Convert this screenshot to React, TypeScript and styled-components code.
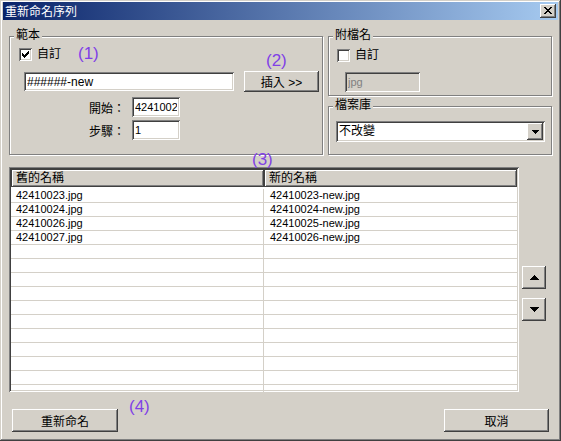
import styled, { createGlobalStyle, css } from "styled-components"

const GlobalStyle = createGlobalStyle`
    html, body {
        margin:0;
        padding:0;
        background:#d4d0c8;
    }
    body {
        font-family: "Liberation Sans", "Noto Sans CJK TC", sans-serif;
        font-size:12px;
        color:#000;
    }
`

const raised = css`
    box-shadow: inset -1px -1px #404040, inset 1px 1px #ffffff, inset -2px -2px #808080, inset 2px 2px #d4d0c8;
`
const sunken = css`
    box-shadow: inset 1px 1px #808080, inset -1px -1px #ffffff, inset 2px 2px #404040, inset -2px -2px #d4d0c8;
`

const Window = styled.div`
    position:relative;
    width:561px;
    height:441px;
    box-sizing:border-box;
    padding:2px 3px 3px 3px;
    background:#d4d0c8;
    box-shadow: inset -1px -1px #404040, inset 1px 1px #d4d0c8, inset -2px -2px #808080, inset 2px 2px #ffffff;
    display:flex;
    flex-direction:column;
`
const TitleBar = styled.div`
    height:18px;
    display:flex;
    align-items:center;
    justify-content:space-between;
    padding:0 2px 0 2px;
    background:linear-gradient(to right, #0a246a, #a6caf0);
    color:white;
    font-family:"Noto Sans CJK TC", sans-serif;
    font-size:12px;
`
const Title = styled.span`
    line-height:18px;
`
const CloseButton = styled.div`
    width:16px;
    height:14px;
    background:#d4d0c8;
    ${raised}
    display:flex;
    align-items:center;
    justify-content:center;
    padding-bottom:1px;
    box-sizing:border-box;
`
const Body = styled.div`
    padding:16px 6px 0 6px;
    display:flex;
    flex-direction:column;
`
const TopRow = styled.div`
    display:flex;
    gap:5px;
    align-items:flex-start;
`
const RightColumn = styled.div`
    display:flex;
    flex-direction:column;
    gap:10px;
`
const Group = styled.div<{ $w: number; $h: number }>`
    position:relative;
    width:${p => p.$w}px;
    height:${p => p.$h}px;
    box-sizing:border-box;
    border:1px solid #808080;
    box-shadow: inset 1px 1px #ffffff, 1px 1px #ffffff;
    display:flex;
    flex-direction:column;
    align-items:flex-start;
`
const Legend = styled.span`
    position:absolute;
    top:-9px;
    left:4px;
    padding:0 2px;
    line-height:14px;
    background:#d4d0c8;
`
const CheckRow = styled.label<{ $mt: number; $ml: number }>`
    display:flex;
    align-items:center;
    height:13px;
    margin:${p => p.$mt}px 0 0 ${p => p.$ml}px;
    gap:5px;
    line-height:13px;
`
const CheckBox = styled.span`
    width:13px;
    height:13px;
    background:white;
    ${sunken}
    display:flex;
    align-items:center;
    justify-content:center;
`
const PatternRow = styled.div`
    display:flex;
    align-items:center;
    height:21px;
    margin-top:10px;
    padding-left:14px;
    gap:10px;
`
const Field = styled.input<{ $w: number; $h: number; $size?: number }>`
    width:${p => p.$w}px;
    height:${p => p.$h}px;
    box-sizing:border-box;
    border:none;
    outline:none;
    margin:0;
    padding:0 3px;
    background:white;
    ${sunken}
    font-family:"Liberation Sans", "Noto Sans CJK TC", sans-serif;
    font-size:${p => p.$size ?? 12}px;
    color:#000;

    &:disabled {
        background:#d4d0c8;
        color:#808080;
    }
`
const Button = styled.button<{ $w: number; $h: number }>`
    width:${p => p.$w}px;
    height:${p => p.$h}px;
    border:none;
    margin:0;
    padding:0;
    background:#d4d0c8;
    ${raised}
    font-family:"Liberation Sans", "Noto Sans CJK TC", sans-serif;
    font-size:12px;
    color:#000;
    display:flex;
    align-items:center;
    justify-content:center;
`
const NumberRow = styled.div<{ $mt: number }>`
    display:flex;
    align-items:center;
    margin:${p => p.$mt}px 0 0 79px;
`
const NumberLabel = styled.span`
    width:43px;
`
const DisabledRow = styled.div`
    margin:10px 0 0 16px;
`
const Combo = styled.div`
    width:209px;
    height:21px;
    box-sizing:border-box;
    margin:14px 0 0 7px;
    padding:2px;
    background:white;
    ${sunken}
    display:flex;
    align-items:center;
`
const ComboText = styled.span`
    flex:1;
    padding-left:1px;
    line-height:17px;
`
const ComboArrow = styled.span`
    width:16px;
    height:17px;
    box-sizing:border-box;
    background:#d4d0c8;
    ${raised}
    display:flex;
    align-items:center;
    justify-content:center;
`
const ListRow = styled.div`
    display:flex;
    align-items:flex-start;
    margin-top:12px;
`
const ListView = styled.div`
    width:510px;
    height:225px;
    box-sizing:border-box;
    padding:2px;
    background:white;
    ${sunken}
    overflow:hidden;
`
const Header = styled.div`
    display:flex;
    height:18px;
`
const HeaderCell = styled.div<{ $w: number }>`
    width:${p => p.$w}px;
    box-sizing:border-box;
    border:1px solid #404040;
    background:#d4d0c8;
    box-shadow: inset 1px 1px #ffffff, inset -1px -1px #808080;
    padding-left:4px;
    line-height:16px;
    font-size:12px;
`
const Rows = styled.div`
    padding-top:2px;
`
const Row = styled.div`
    display:flex;
    height:14px;
    box-sizing:border-box;
    border-bottom:1px solid #d4d0c8;
`
const Cell = styled.div<{ $w: number; $first?: boolean }>`
    width:${p => p.$w}px;
    box-sizing:border-box;
    padding-left:${p => (p.$first ? 5 : 6)}px;
    border-right:${p => (p.$first ? "1px solid #d4d0c8" : "none")};
    line-height:13px;
    font-size:11px;
    white-space:nowrap;
    overflow:hidden;
`
const SideButtons = styled.div`
    display:flex;
    flex-direction:column;
    gap:9px;
    margin:99px 0 0 3px;
`
const BottomRow = styled.div`
    display:flex;
    justify-content:space-between;
    margin-top:17px;
    padding:0 3px 0 3px;
`
const Annotation = styled.span<{ $x: number; $y: number }>`
    position:absolute;
    left:${p => p.$x}px;
    top:${p => p.$y}px;
    font-family:"Liberation Sans", sans-serif;
    font-size:17px;
    line-height:17px;
    color:#8040e6;
`

const Pixels = ({ w, h, d }: { w: number; h: number; d: string }) => (
    <svg width={w} height={h} viewBox={`0 0 ${w} ${h}`} shapeRendering="crispEdges">
        <path d={d} fill="#000" />
    </svg>
)

const closeIcon = "M0 0h2v1h-2z M6 0h2v1h-2z M1 1h2v1h-2z M5 1h2v1h-2z M2 2h4v1h-4z M3 3h2v1h-2z M2 4h4v1h-4z M1 5h2v1h-2z M5 5h2v1h-2z M0 6h2v1h-2z M6 6h2v1h-2z"
const checkIcon = "M6 0h1v1h-1z M5 1h2v1h-2z M0 2h1v1h-1z M4 2h3v1h-3z M0 3h2v1h-2z M3 3h3v1h-3z M0 4h5v1h-5z M1 5h3v1h-3z M2 6h1v1h-1z"
const comboDown = "M0 0h7v1h-7z M1 1h5v1h-5z M2 2h3v1h-3z M3 3h1v1h-1z"
const bigUp = "M4 0h1v1h-1z M3 1h3v1h-3z M2 2h5v1h-5z M1 3h7v1h-7z M0 4h9v1h-9z"
const bigDown = "M0 0h9v1h-9z M1 1h7v1h-7z M2 2h5v1h-5z M3 3h3v1h-3z M4 4h1v1h-1z"

const oldNames = ["42410023.jpg", "42410024.jpg", "42410026.jpg", "42410027.jpg"]
const newNames = ["42410023-new.jpg", "42410024-new.jpg", "42410025-new.jpg", "42410026-new.jpg"]

function App() {
    const rows = Array.from({ length: 15 }, (_, i) => i)

    return (
        <>
            <GlobalStyle />
            <Window>
                <TitleBar>
                    <Title>重新命名序列</Title>
                    <CloseButton>
                        <Pixels w={8} h={7} d={closeIcon} />
                    </CloseButton>
                </TitleBar>
                <Body>
                    <TopRow>
                        <Group $w={314} $h={119}>
                            <Legend>範本</Legend>
                            <CheckRow $mt={11} $ml={9}>
                                <CheckBox>
                                    <Pixels w={7} h={7} d={checkIcon} />
                                </CheckBox>
                                <span>自訂</span>
                            </CheckRow>
                            <PatternRow>
                                <Field $w={210} $h={19} readOnly value="######-new" />
                                <Button $w={75} $h={21}>插入 &gt;&gt;</Button>
                            </PatternRow>
                            <NumberRow $mt={5}>
                                <NumberLabel>開始：</NumberLabel>
                                <Field $w={48} $h={20} $size={11} readOnly value="4241002" />
                            </NumberRow>
                            <NumberRow $mt={3}>
                                <NumberLabel>步驟：</NumberLabel>
                                <Field $w={48} $h={20} $size={11} readOnly value="1" />
                            </NumberRow>
                        </Group>
                        <RightColumn>
                            <Group $w={224} $h={60}>
                                <Legend>附檔名</Legend>
                                <CheckRow $mt={12} $ml={8}>
                                    <CheckBox />
                                    <span>自訂</span>
                                </CheckRow>
                                <DisabledRow>
                                    <Field $w={75} $h={20} $size={11} disabled value="jpg" readOnly />
                                </DisabledRow>
                            </Group>
                            <Group $w={224} $h={49}>
                                <Legend>檔案庫</Legend>
                                <Combo>
                                    <ComboText>不改變</ComboText>
                                    <ComboArrow>
                                        <Pixels w={7} h={4} d={comboDown} />
                                    </ComboArrow>
                                </Combo>
                            </Group>
                        </RightColumn>
                    </TopRow>
                    <ListRow>
                        <ListView>
                            <Header>
                                <HeaderCell $w={253}>舊的名稱</HeaderCell>
                                <HeaderCell $w={253}>新的名稱</HeaderCell>
                            </Header>
                            <Rows>
                                {rows.map(i => (
                                    <Row key={i}>
                                        <Cell $w={253} $first>{oldNames[i] ?? ""}</Cell>
                                        <Cell $w={253}>{newNames[i] ?? ""}</Cell>
                                    </Row>
                                ))}
                            </Rows>
                        </ListView>
                        <SideButtons>
                            <Button $w={24} $h={23}>
                                <Pixels w={9} h={5} d={bigUp} />
                            </Button>
                            <Button $w={24} $h={23}>
                                <Pixels w={9} h={5} d={bigDown} />
                            </Button>
                        </SideButtons>
                    </ListRow>
                    <BottomRow>
                        <Button $w={106} $h={23}>重新命名</Button>
                        <Button $w={105} $h={23}>取消</Button>
                    </BottomRow>
                </Body>
                <Annotation $x={78} $y={45}>(1)</Annotation>
                <Annotation $x={266} $y={52}>(2)</Annotation>
                <Annotation $x={252} $y={151}>(3)</Annotation>
                <Annotation $x={129} $y={398}>(4)</Annotation>
            </Window>
        </>
    )
}

export default App
